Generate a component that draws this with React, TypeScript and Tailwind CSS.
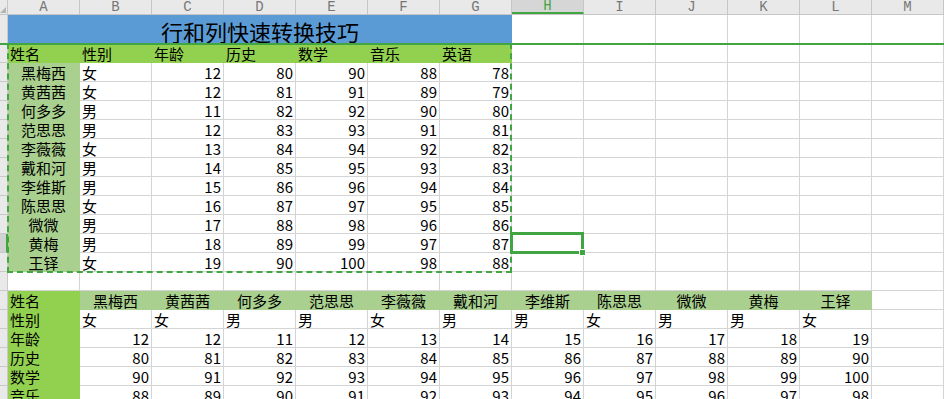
import React from 'react';

// 表格数据
const names = ['黑梅西', '黄茜茜', '何多多', '范思思', '李薇薇', '戴和河', '李维斯', '陈思思', '微微', '黄梅', '王铎'];
const genders = ['女', '女', '男', '男', '女', '男', '男', '女', '男', '男', '女'];
const ages = [12, 12, 11, 12, 13, 14, 15, 16, 17, 18, 19];
const history = [80, 81, 82, 83, 84, 85, 86, 87, 88, 89, 90];
const math = [90, 91, 92, 93, 94, 95, 96, 97, 98, 99, 100];
const music = [88, 89, 90, 91, 92, 93, 94, 95, 96, 97, 98];
const english = [78, 79, 80, 81, 82, 83, 84, 85, 86, 87, 88];

const letters = ['A', 'B', 'C', 'D', 'E', 'F', 'G', 'H', 'I', 'J', 'K', 'L', 'M'];
const headers = ['姓名', '性别', '年龄', '历史', '数学', '音乐', '英语'];

type Align = 'l' | 'c' | 'r';
type Fill = 'none' | 'green' | 'light';

type CellData = { text?: React.ReactNode; align?: Align; fill?: Fill };

const Cell: React.FC<CellData> = ({ text, align = 'l', fill = 'none' }) => {
  const alignCls = align === 'r' ? 'justify-end' : align === 'c' ? 'justify-center' : 'justify-start';
  const fillCls =
    fill === 'green'
      ? 'bg-[#92d050] border-[#92d050]'
      : fill === 'light'
        ? 'bg-[#a9d08e] border-[#a9d08e]'
        : 'bg-white border-[#d4d4d4]';
  return (
    <div
      className={`w-[72px] shrink-0 h-full border-r border-b flex items-end px-[2px] whitespace-nowrap ${alignCls} ${fillCls}`}
    >
      {text}
    </div>
  );
};

const RowHead: React.FC<{ active?: boolean }> = ({ active }) => (
  <div
    className={`w-[8px] shrink-0 h-full border-b border-[#c9c9c9] ${
      active ? 'bg-[#d2d2d2] border-r-2 border-r-[#41a541]' : 'bg-[#e9e9e9] border-r border-r-[#c9c9c9]'
    }`}
  />
);

const Row: React.FC<{ cells: CellData[]; active?: boolean }> = ({ cells, active }) => {
  const full = [...cells];
  while (full.length < 13) full.push({});
  return (
    <div className="flex h-[19px] leading-[17px]">
      <RowHead active={active} />
      {full.map((c, i) => (
        <Cell key={i} {...c} />
      ))}
    </div>
  );
};

export default function App() {
  // 上表：第 3–13 行
  const topRows: CellData[][] = names.map((n, i) => [
    { text: n, align: 'c', fill: 'light' },
    { text: genders[i] },
    { text: ages[i], align: 'r' },
    { text: history[i], align: 'r' },
    { text: math[i], align: 'r' },
    { text: music[i], align: 'r' },
    { text: english[i], align: 'r' },
  ]);

  // 下表：转置后
  const bottomRows: CellData[][] = [
    [{ text: '姓名', fill: 'green' }, ...names.map((n) => ({ text: n, align: 'c' as Align, fill: 'light' as Fill }))],
    [{ text: '性别', fill: 'green' }, ...genders.map((g) => ({ text: g }))],
    [{ text: '年龄', fill: 'green' }, ...ages.map((v) => ({ text: v, align: 'r' as Align }))],
    [{ text: '历史', fill: 'green' }, ...history.map((v) => ({ text: v, align: 'r' as Align }))],
    [{ text: '数学', fill: 'green' }, ...math.map((v) => ({ text: v, align: 'r' as Align }))],
    [{ text: '音乐', fill: 'green' }, ...music.map((v) => ({ text: v, align: 'r' as Align }))],
  ];

  return (
    <div
      className="relative w-[944px] h-[399px] overflow-hidden bg-white text-black text-[15px]"
      style={{ fontFamily: '"Noto Sans CJK SC", "Noto Sans", sans-serif' }}
    >
      {/* 列标题 */}
      <div className="flex h-[15px] bg-[#e9e9e9] border-b border-[#c6c6c6]">
        <div className="w-[8px] shrink-0 border-r border-[#c6c6c6] relative">
          <div className="absolute right-[1px] bottom-[1px] w-0 h-0 border-l-[6px] border-l-transparent border-b-[6px] border-b-[#b5b5b5]" />
        </div>
        {letters.map((l) => (
          <div
            key={l}
            className={`w-[72px] shrink-0 flex items-center justify-center text-[14px] leading-[14px] border-r border-[#c6c6c6] ${
              l === 'H' ? 'bg-[#d6d6d6] text-[#41a541] border-b-2 border-b-[#41a541]' : 'text-[#777777]'
            }`}
            style={{ fontFamily: '"Liberation Mono", monospace' }}
          >
            {l}
          </div>
        ))}
      </div>

      {/* 第 1 行：标题 */}
      <div className="flex h-[29px]">
        <RowHead />
        <div className="w-[504px] shrink-0 h-full bg-[#5b9bd5] flex items-end justify-center text-[22px] leading-[26px]">
          行和列快速转换技巧
        </div>
        {letters.slice(7).map((l) => (
          <Cell key={l} />
        ))}
      </div>

      {/* 第 2 行：表头 */}
      <Row cells={headers.map((h) => ({ text: h, fill: 'green' as Fill }))} />
      {topRows.map((cells, i) => (
        <Row key={i} cells={cells} active={i === 9} />
      ))}
      <Row cells={[]} />
      {bottomRows.map((cells, i) => (
        <Row key={`b${i}`} cells={cells} />
      ))}

      {/* 冻结线 */}
      <div className="absolute left-0 right-0 top-[43px] h-[2px] bg-[#41a541]" />
      {/* 复制区域虚线框 */}
      <div className="absolute left-[7px] top-[43px] w-[505px] h-[230px] border-2 border-dashed border-[#41a541]" />
      {/* 选中单元格 H12 */}
      <div className="absolute left-[510px] top-[232px] w-[74px] h-[22px] border-[3px] border-[#41a541]" />
      <div className="absolute left-[579px] top-[249px] w-[7px] h-[7px] bg-[#41a541] border border-white" />
    </div>
  );
}
